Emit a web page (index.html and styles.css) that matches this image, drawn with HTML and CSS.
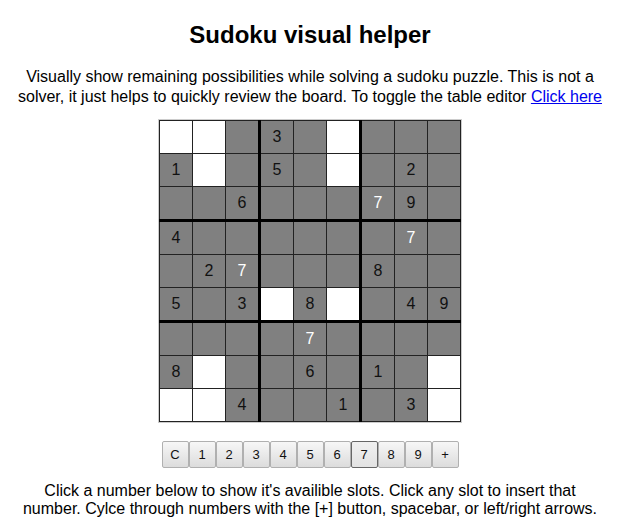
FILE: index.html
```html
<!DOCTYPE html>
<html>
<head>
<meta charset="utf-8">
<title>Sudoku visual helper</title>
<link rel="stylesheet" href="styles.css">
</head>
<body>
<div class="page">
  <h1 class="title">Sudoku visual helper</h1>
  <p class="intro">Visually show remaining possibilities while solving a sudoku puzzle. This is not a solver, it just helps to quickly review the board. To toggle the table editor <a href="#" class="link">Click here</a></p>
  <table class="board">
    <tr>
      <td class="w"></td><td class="w"></td><td class="bc"></td>
      <td>3</td><td></td><td class="w bc"></td>
      <td></td><td></td><td></td>
    </tr>
    <tr>
      <td>1</td><td class="w"></td><td class="bc"></td>
      <td>5</td><td></td><td class="w bc"></td>
      <td></td><td>2</td><td></td>
    </tr>
    <tr class="br">
      <td></td><td></td><td class="bc">6</td>
      <td></td><td></td><td class="bc"></td>
      <td class="sel">7</td><td>9</td><td></td>
    </tr>
    <tr>
      <td>4</td><td></td><td class="bc"></td>
      <td></td><td></td><td class="bc"></td>
      <td></td><td class="sel">7</td><td></td>
    </tr>
    <tr>
      <td></td><td>2</td><td class="bc sel">7</td>
      <td></td><td></td><td class="bc"></td>
      <td>8</td><td></td><td></td>
    </tr>
    <tr class="br">
      <td>5</td><td></td><td class="bc">3</td>
      <td class="w"></td><td>8</td><td class="w bc"></td>
      <td></td><td>4</td><td>9</td>
    </tr>
    <tr>
      <td></td><td></td><td class="bc"></td>
      <td></td><td class="sel">7</td><td class="bc"></td>
      <td></td><td></td><td></td>
    </tr>
    <tr>
      <td>8</td><td class="w"></td><td class="bc"></td>
      <td></td><td>6</td><td class="bc"></td>
      <td>1</td><td></td><td class="w"></td>
    </tr>
    <tr>
      <td class="w"></td><td class="w"></td><td class="bc">4</td>
      <td></td><td></td><td class="bc">1</td>
      <td></td><td>3</td><td class="w"></td>
    </tr>
  </table>
  <div class="pad">
    <button class="key">C</button><button class="key">1</button><button class="key">2</button><button class="key">3</button><button class="key">4</button><button class="key">5</button><button class="key">6</button><button class="key active">7</button><button class="key">8</button><button class="key">9</button><button class="key">+</button>
  </div>
  <p class="help">Click a number below to show it's availible slots. Click any slot to insert that number. Cylce through numbers with the [+] button, spacebar, or left/right arrows.</p>
</div>
</body>
</html>
```

FILE: styles.css
```css
html, body {
  margin: 0;
  padding: 0;
  background: #ffffff;
}

.page {
  padding: 8px;
  font-family: "Liberation Sans", Arial, sans-serif;
  color: #000;
  text-align: center;
}

.title {
  font-size: 24px;
  font-weight: bold;
  margin: 13px 0 0;
  line-height: 28px;
}

.intro {
  font-size: 16px;
  line-height: 20px;
  margin: 18px 0 0;
}

.link {
  color: #0000ee;
  text-decoration: underline;
}

.board {
  border-collapse: collapse;
  margin: 13px auto 0;
  border: 1px solid #222;
  outline: 1px solid #ccc;
}

.board td {
  width: 32px;
  height: 32px;
  padding: 0;
  border: 1px solid #222;
  background: #808080;
  color: #111;
  font-size: 16px;
  text-align: center;
  vertical-align: middle;
  line-height: 18px;
}

.board td.w {
  background: #ffffff;
}

.board td.sel {
  color: #ffffff;
}

.board td.bc {
  border-right: 3px solid #000;
}

.board tr.br td {
  border-bottom: 3px solid #000;
}

.pad {
  display: flex;
  justify-content: center;
  margin-top: 19px;
}

.key {
  width: 27px;
  height: 27px;
  padding: 0;
  margin: 0;
  font-family: "Liberation Sans", Arial, sans-serif;
  font-size: 13px;
  color: #111;
  background: linear-gradient(#f7f7f7, #dcdcdc);
  border: 1px solid #b0b0b0;
  border-radius: 2px;
}

.key.active {
  border-color: #666;
  background: linear-gradient(#f0f0f0, #e2e2e2);
}

.help {
  font-size: 16px;
  line-height: 18px;
  max-width: 585px;
  margin: 14px auto 0;
}
```
